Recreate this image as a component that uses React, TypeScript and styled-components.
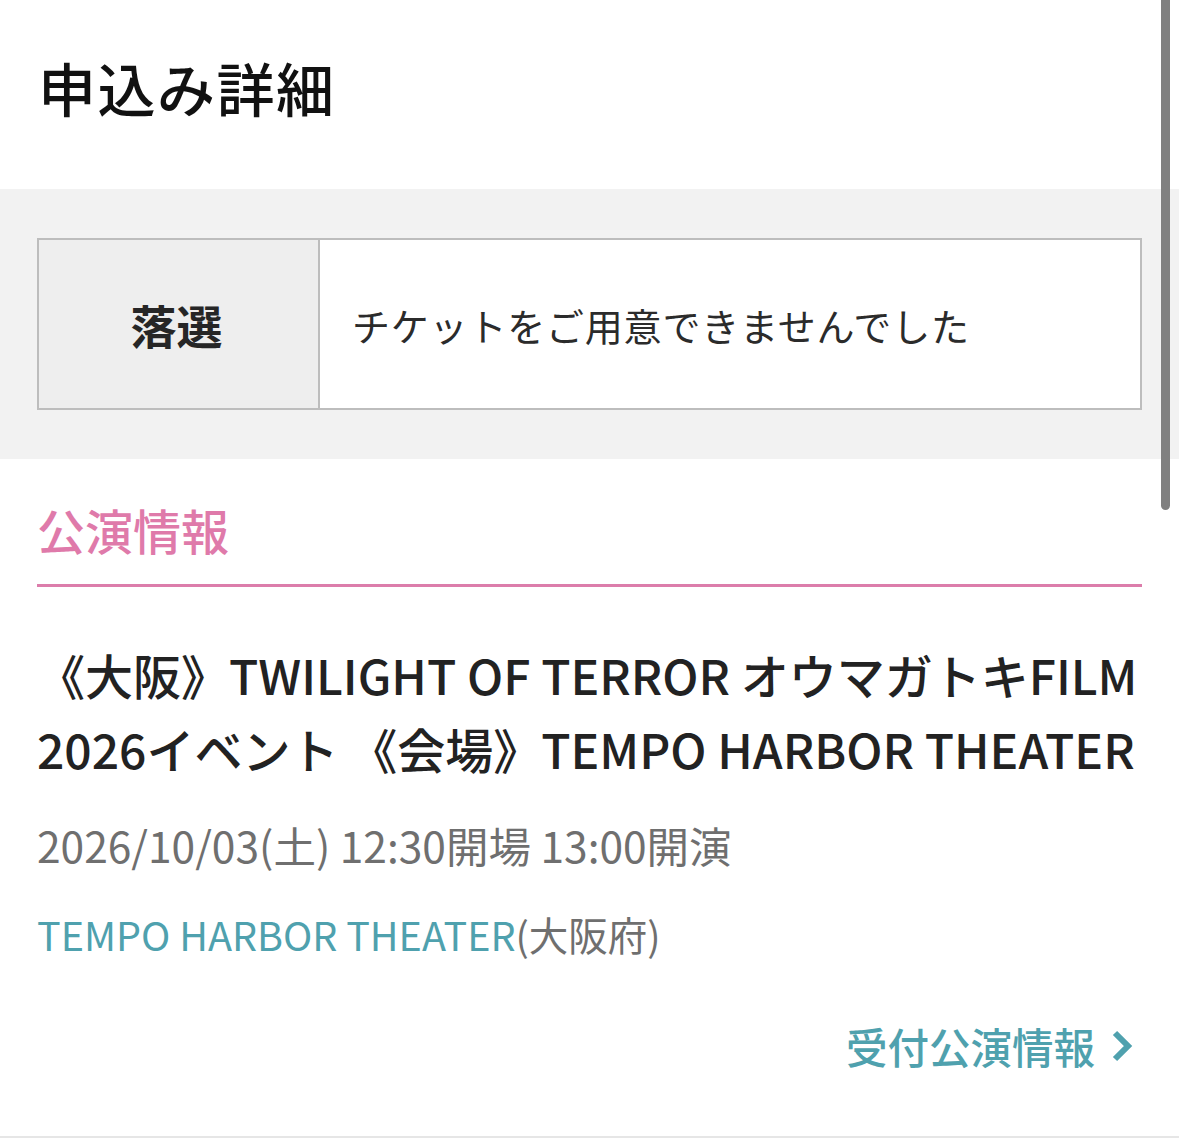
import React from "react";
import styled, { createGlobalStyle } from "styled-components";

const GlobalStyle = createGlobalStyle`
  html, body {
    margin: 0;
    padding: 0;
    background: #ffffff;
  }
  body {
    font-family: "Noto Sans CJK JP", "Noto Sans", sans-serif;
    color: #222222;
  }
  * { box-sizing: border-box; }
`;

const Page = styled.div`
  position: relative;
  width: 1179px;
  min-height: 1139px;
  background: #ffffff;
  overflow: hidden;
`;

const Header = styled.header`
  height: 189px;
  padding: 47px 38px 0;
`;

const PageTitle = styled.h1`
  margin: 0;
  font-size: 58px;
  line-height: 80px;
  font-weight: 500;
  color: #111111;
  letter-spacing: 1.5px;
`;

const StatusBand = styled.section`
  background: #f2f2f2;
  padding: 49px 37px;
`;

const StatusBox = styled.div`
  display: grid;
  grid-template-columns: 281px 1fr;
  height: 172px;
  border: 2px solid #bdbdbd;
  background: #ffffff;
`;

const StatusLabel = styled.div`
  display: flex;
  align-items: center;
  justify-content: center;
  background: #eeeeee;
  border-right: 2px solid #bdbdbd;
  font-size: 46px;
  font-weight: 700;
  color: #262626;
  padding-right: 4px;
`;

const StatusMessage = styled.div`
  display: flex;
  align-items: center;
  padding-left: 32px;
  font-size: 38px;
  font-weight: 400;
  color: #2b2b2b;
  letter-spacing: 0.8px;
`;

const InfoSection = styled.section`
  padding: 0 37px;
`;

const SectionHeading = styled.h2`
  margin: 40px 0 0;
  padding-bottom: 25px;
  border-bottom: 3px solid #dc7dab;
  font-size: 48px;
  line-height: 60px;
  font-weight: 500;
  color: #df7aaa;
`;

const EventTitle = styled.p`
  margin: 50px 0 0;
  font-size: 48px;
  line-height: 74px;
  font-weight: 500;
  color: #222222;
  white-space: nowrap;
`;

const EventDate = styled.p`
  margin: 32px 0 0;
  font-size: 42.5px;
  line-height: 56px;
  font-weight: 400;
  color: #6f6f6f;
`;

const Venue = styled.p`
  margin: 35px 0 0;
  font-size: 39.5px;
  line-height: 52px;
  font-weight: 400;
  color: #6f6f6f;
`;

const VenueName = styled.span`
  color: #4fa1ae;
`;

const LinkRow = styled.div`
  display: flex;
  justify-content: flex-end;
  margin: 58px -37px 0;
  padding: 0 46px 62px 0;
  border-bottom: 2px solid #e6e6e6;
`;

const DetailLink = styled.a`
  display: inline-flex;
  align-items: center;
  gap: 16px;
  font-size: 41.5px;
  line-height: 56px;
  font-weight: 500;
  color: #4fa1ae;
  text-decoration: none;
`;

const Chevron = styled.svg`
  width: 22px;
  height: 32px;
  flex: none;
`;

const Scrollbar = styled.div`
  position: absolute;
  top: 0;
  left: 1161px;
  width: 9px;
  height: 510px;
  background: #808080;
  border-radius: 0 0 5px 5px;
`;

export default function App() {
  return (
    <>
      <GlobalStyle />
      <Page>
        <Header>
          <PageTitle>申込み詳細</PageTitle>
        </Header>
        <StatusBand>
          <StatusBox>
            <StatusLabel>落選</StatusLabel>
            <StatusMessage>チケットをご用意できませんでした</StatusMessage>
          </StatusBox>
        </StatusBand>
        <InfoSection>
          <SectionHeading>公演情報</SectionHeading>
          <EventTitle>
            《大阪》TWILIGHT OF TERROR オウマガトキFILM
            <br />
            2026イベント 《会場》TEMPO HARBOR THEATER
          </EventTitle>
          <EventDate>2026/10/03(土) 12:30開場 13:00開演</EventDate>
          <Venue>
            <VenueName>TEMPO HARBOR THEATER</VenueName>(大阪府)
          </Venue>
          <LinkRow>
            <DetailLink href="#">
              受付公演情報
              <Chevron viewBox="0 0 22 32" aria-hidden="true">
                <path
                  d="M4 3 L17 16 L4 29"
                  fill="none"
                  stroke="#4fa1ae"
                  strokeWidth="6"
                  strokeLinejoin="miter"
                />
              </Chevron>
            </DetailLink>
          </LinkRow>
        </InfoSection>
        <Scrollbar />
      </Page>
    </>
  );
}
